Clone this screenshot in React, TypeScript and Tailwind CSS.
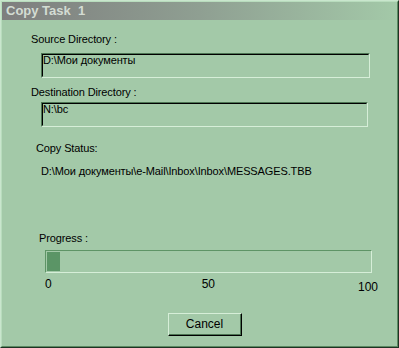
const BG = 'bg-[#a3c9a8]';

function Sunken({ text, className }: { text: string; className: string }) {
  return (
    <div className={`border border-t-[#4d7553] border-l-[#4d7553] border-r-[#d6eed8] border-b-[#d6eed8] ${className}`}>
      <div className="h-full border border-t-black border-l-black border-r-[#a3c9a8] border-b-[#a3c9a8]">
        <div className="leading-[10px]">{text}</div>
      </div>
    </div>
  );
}

export default function App() {
  return (
    <div
      className={`w-[399px] h-[348px] ${BG} border border-t-[#c9e6cd] border-l-[#c9e6cd] border-r-[#1f3323] border-b-[#1f3323] text-black text-[11px] tracking-[-0.12px]`}
      style={{ fontFamily: '"Liberation Sans", Arial, sans-serif' }}
    >
      <div className="h-full border border-t-[#b8dcbd] border-l-[#b8dcbd] border-r-[#5b8a62] border-b-[#5b8a62] flex flex-col">
        <div className="h-[18px] flex items-center pl-[4px] bg-gradient-to-r from-[#7e7e7e] via-[#8f9f92] to-[#a3c9a8]">
          <span className="text-[13px] font-bold tracking-normal text-[#d3dcd3] whitespace-pre">Copy Task  1</span>
        </div>

        <div className="flex flex-col items-start pl-[29px] leading-[13px]">
          <div className="mt-[13px]">Source Directory :</div>
          <Sunken text="D:\Мои документы" className="mt-[7px] ml-[10px] w-[329px] h-[25px]" />

          <div className="mt-[8px]">Destination Directory :</div>
          <Sunken text="N:\bc" className="mt-[3px] ml-[10px] w-[327px] h-[25px]" />

          <div className="mt-[15px] ml-[5px]">Copy Status:</div>
          <div className="mt-[10px] ml-[10px]">D:\Мои документы\e-Mail\Inbox\Inbox\MESSAGES.TBB</div>

          <div className="mt-[54px] ml-[8px]">Progress :</div>
          <div className="mt-[5px] ml-[14px] w-[327px] h-[23px] border border-t-[#5e9466] border-l-[#5e9466] border-r-[#d6eed8] border-b-[#d6eed8] p-[1px]">
            <div className="h-full w-[13px] bg-[#5b9566]" />
          </div>

          <div className="mt-[4px] ml-[14px] w-[333px] flex items-start text-[12px] tracking-normal leading-[14px]">
            <span>0</span>
            <span className="ml-[150px]">50</span>
            <span className="ml-auto mt-[3px]">100</span>
          </div>

          <button className="mt-[19px] ml-[137px] w-[74px] h-[23px] border border-t-[#d6eed8] border-l-[#d6eed8] border-r-black border-b-black p-0">
            <div className="h-full flex items-center justify-center border-r border-b border-[#4d7553] text-[12px] tracking-normal">
              Cancel
            </div>
          </button>
        </div>
      </div>
    </div>
  );
}
